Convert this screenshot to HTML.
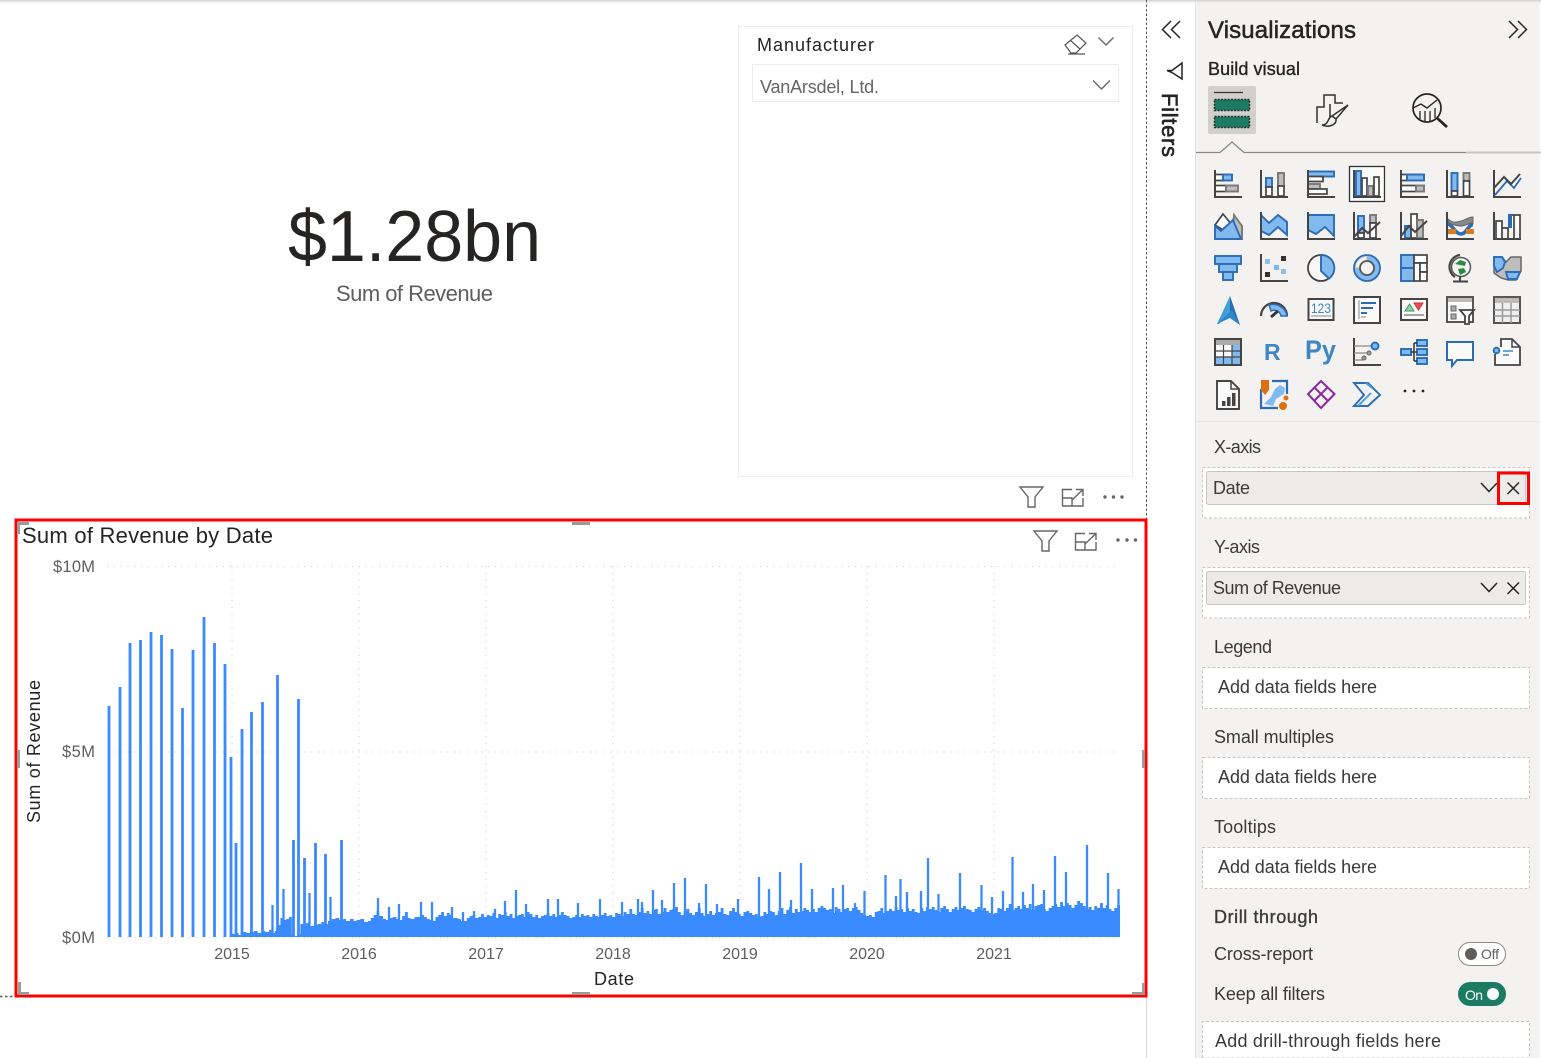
<!DOCTYPE html>
<html><head><meta charset="utf-8"><title>Power BI report</title>
<style>
html,body{margin:0;padding:0;background:#fff;width:1541px;height:1058px;overflow:hidden}
svg{display:block;position:absolute;left:0;top:0}
text{font-family:"Liberation Sans",Arial,sans-serif}
.l{font-size:18px;fill:#3b3a39}
.a{fill:none;stroke:#444;stroke-width:2}
.w{fill:#fff;stroke:#444;stroke-width:1.700}
.b{fill:#82baf0;stroke:#2b6cb5;stroke-width:1.900}
.g{fill:#bdbdbd;stroke:#777;stroke-width:1.900}
.n{fill:none;stroke:#2b6cb5;stroke-width:1.800}
.ui{fill:none;stroke:#666;stroke-width:1.400}
.dk{fill:none;stroke:#252423;stroke-width:1.500}
</style></head><body>
<svg width="1541" height="1058" viewBox="0 0 1541 1058" xmlns="http://www.w3.org/2000/svg">
<defs><linearGradient id="sh" x1="0" y1="0" x2="0" y2="1"><stop offset="0" stop-color="#d0d0d0"/><stop offset="1" stop-color="#fff" stop-opacity="0"/></linearGradient></defs>
<rect width="1541" height="1058" fill="#fff"/>

<!-- panes -->
<rect x="1196" y="0" width="345" height="1058" fill="#f3f2f1"/>
<rect x="1195" y="0" width="1" height="1058" fill="#e3e3e3"/>
<rect x="1539" y="0" width="2" height="1058" fill="#fafafa"/>
<rect x="0" y="0" width="1541" height="5" fill="url(#sh)"/>
<path d="M1146.500 0V519" stroke="#555" stroke-width="1" stroke-dasharray="2.500 2"/>
<path d="M1146.500 997V1058" stroke="#d8d8d8" stroke-width="1"/>
<path d="M0 996.500H15" stroke="#555" stroke-width="1.500" stroke-dasharray="2.500 2.500"/>

<!-- card -->
<text x="288" y="261" font-size="72" fill="#252423" textLength="253" lengthAdjust="spacingAndGlyphs">$1.28bn</text>
<text x="336" y="301" font-size="22" fill="#605e5c" textLength="157">Sum of Revenue</text>

<!-- slicer -->
<rect x="738.500" y="26.500" width="394" height="450" fill="#fff" stroke="#ececec"/>
<text x="757" y="51" font-size="18" fill="#252423" textLength="117">Manufacturer</text>
<path d="M1065 45L1077 35L1086 43L1076 53H1071ZM1070 40L1080 49M1068 54H1085" fill="none" stroke="#555" stroke-width="1.200"/>
<path d="M1098.500 37.500L1106 45L1113.500 37.500" class="ui" stroke="#555"/>
<rect x="752.500" y="64.500" width="366" height="37" fill="#fff" stroke="#ececec"/>
<text x="760" y="93" font-size="18" fill="#666" textLength="119">VanArsdel, Ltd.</text>
<path d="M1093 80.500L1101.500 89L1110 80.500" class="ui"/>
<path d="M1020 487H1043L1035 497V507H1028V497Z" class="ui"/>
<path d="M1072 489.500H1062.500V506H1083V498M1063 498H1072V506M1072 500L1083 489.500M1076 489.500H1083V496" class="ui"/>
<g fill="#666"><circle cx="1105" cy="497" r="1.700"/><circle cx="1113.500" cy="497" r="1.700"/><circle cx="1122" cy="497" r="1.700"/></g>

<!-- chart -->
<text x="22" y="543" font-size="22" fill="#252423" textLength="251">Sum of Revenue by Date</text>
<path d="M1034 531H1057L1049 541V551H1042V541Z" class="ui"/>
<path d="M1085 533.500H1075.500V550H1096V542M1076 542H1085V550M1085 544L1096 533.500M1089 533.500H1096V540" class="ui"/>
<g fill="#666"><circle cx="1118" cy="540" r="1.700"/><circle cx="1127" cy="540" r="1.700"/><circle cx="1135.500" cy="540" r="1.700"/></g>

<g font-size="16.500" fill="#605e5c">
<text x="53" y="572" textLength="42">$10M</text>
<text x="62" y="757" textLength="33">$5M</text>
<text x="62" y="943" textLength="33">$0M</text>
</g>
<g stroke="#d9d9d9" stroke-width="1.300" stroke-dasharray="1.300 5.500" fill="none">
<path d="M107 566.500H1120M107 752H1120M107 937.500H1120"/>
<path d="M232 566V937M359 566V937M486 566V937M613 566V937M740 566V937M867 566V937M994 566V937"/>
</g>
<g font-size="16" fill="#605e5c" text-anchor="middle">
<text x="232" y="959">2015</text><text x="359" y="959">2016</text><text x="486" y="959">2017</text><text x="613" y="959">2018</text><text x="740" y="959">2019</text><text x="867" y="959">2020</text><text x="994" y="959">2021</text>
</g>
<text x="594" y="985" font-size="18" fill="#252423" textLength="40">Date</text>
<text transform="translate(40 823) rotate(-90)" font-size="18" fill="#252423" textLength="143">Sum of Revenue</text>

<!-- bars -->
<path fill="#3a8bff" transform="translate(231 0) scale(.9508 1) translate(-231 0)" d="M231 937V934h4V933h4V935h4V932h4V933h4V932h4V931h4V933h4V931h4V932h4V930h3V933h3V931h3V925h3V918h3V920h3V919h3V917h3V934h3V936h3V934h3V924h3V926h3V923h4V926h4V925h4V924h4V922h3V924h4V921h4V919h4V918h4V920h4V919h3V921h4V919h4V921h3V920h4V919h4V922h4V921h3V918h3V915h3V911h3V916h4V919h3V920h3V918h4V917h4V919h3V920h3V916h3V912h3V918h3V919h4V917h4V917h3V915h3V917h3V919h3V920h3V921h3V917h3V915h3V912h3V916h3V913h3V915h3V918h3V918h3V919h3V921h3V921h3V918h3V916h3V915h3V918h3V917h3V914h3V917h3V915h3V916h3V913h3V918h3V914h3V915h3V912h3V916h3V914h3V918h3V916h3V915h3V914h3V917h3V912h3V914h3V917h3V915h3V918h3V916h3V915h3V913h3V916h3V914h3V917h3V915h3V912h3V915h3V916h3V918h3V917h3V915h3V917h3V914h3V916h3V915h3V917h3V914h3V916h3V917h3V915h3V913h3V916h3V915h3V917h3V913h3V914h3V916h3V912h3V914h3V909h3V914h3V915h3V912h3V908h3V913h3V911h3V914h3V910h3V909h3V914h3V912h3V908h3V912h3V910h3V909h3V907h3V912h3V915h3V911h3V909h3V913h3V915h3V912h3V908h3V913h3V916h3V914h3V911h3V915h3V913h3V912h3V908h3V914h3V915h3V911h3V908h3V912h3V914h3V916h3V912h3V911h3V913h3V915h3V914h3V917h3V916h3V912h3V914h3V911h3V912h3V915h3V911h3V908h3V914h3V910h3V907h3V913h3V909h3V912h3V911h3V908h3V910h3V912h3V909h3V912h3V908h3V906h3V908h3V910h3V909h3V913h3V907h3V909h3V912h3V909h3V908h3V911h3V908h3V907h3V910h3V913h3V915h3V916h3V915h3V917h3V912h3V911h3V908h3V913h3V911h3V909h3V911h3V907h3V910h3V909h3V912h3V908h3V911h3V909h3V912h3V913h3V908h3V911h3V907h3V909h3V907h3V910h3V912h3V908h3V906h3V909h3V912h3V909h3V907h3V910h3V908h3V906h3V909h3V910h3V912h3V909h3V907h3V910h3V908h3V911h3V913h3V914h3V913h3V908h3V909h3V911h3V908h3V904h3V910h3V908h3V906h3V909h3V905h3V908h3V904h3V910h3V906h3V905h3V904h3V909h3V911h3V908h3V906h3V904h3V907h3V902h3V906h3V903h3V905h3V908h3V905h3V901h3V903h3V906h3V909h3V907h3V910h3V906h3V908h3V903h3V908h3V905h3V909h3V911h3V908h3V905h3V903V937Z"/>
<path fill="none" stroke="#3a8bff" stroke-width="2.800" d="M109 937V706M120 937V687M130 937V643M140.500 937V640M151 937V632M161.500 937V635M172 937V649M182.500 937V708M193 937V650M204 937V617M214.500 937V643M225 937V664M231 937V757M236 937V843M242 937V729M251.500 937V712M262.500 937V702M277.500 937V675M298.500 937V699M293.500 937V840M304.500 937V858M315.500 937V843M325.500 937V854M341.500 937V840"/>
<path fill="none" stroke="#3a8bff" stroke-width="2.300" d="M272.500 937V905M283.500 937V889M309.500 937V893M330.500 937V897M378 937V898M389 937V907M399 937V904M421 937V902M432 937V902M452 937V907M463 937V912M474 937V911M495 937V909M505 937V901M516 937V890M526 937V904M548 937V899M558 937V899M578 937V903M600 937V899M622 937V902M638 937V899M642 937V902M653 937V890M662 937V900M674 937V883M685 937V878M699 937V903M706 937V884M717 937V904M738 937V899M759 937V877M769 937V889M780 937V872M791 937V900M801 937V863M812 937V889M833 937V888M843 937V885M855 937V903M864.500 937V891M885.500 937V875M896 937V896M900.500 937V879M907 937V892M921 937V891M928 937V858M938.500 937V894M960 937V873M981.500 937V885M992 937V897M1003 937V891M1012.500 937V857M1023 937V892M1033 937V884M1044 937V890M1055 937V856M1066 937V872M1087 937V845M1108 937V873M1118.500 937V889"/>

<!-- red selection + handles -->
<rect x="16" y="520" width="1130" height="476" fill="none" stroke="#fe0000" stroke-width="3"/>
<g fill="#9b9b9b">
<path d="M17 522H29V525H20V534H17Z"/>
<path d="M18 982H21V992H29V995H18Z"/>
<path d="M1132 992H1142V983H1145V995H1132Z"/>
<rect x="572" y="522" width="18" height="3"/><rect x="572" y="992" width="18" height="3"/>
<rect x="17" y="750" width="3" height="18"/><rect x="1142" y="750" width="3" height="18"/>
</g>

<!-- filter pane -->
<path d="M1171 21L1162.500 29.500L1171 38M1180 21L1171.500 29.500L1180 38" class="dk"/>
<path d="M1167 70.500H1172L1182 63V79L1172 72.500Z" class="dk"/>
<text transform="translate(1162 93) rotate(90)" font-size="22" fill="#252423" textLength="64" stroke="#252423" stroke-width=".6">Filters</text>

<!-- viz pane header -->
<text x="1208" y="38" font-size="24" fill="#252423" stroke="#252423" stroke-width=".5" textLength="148">Visualizations</text>
<path d="M1509 21L1517.500 29.500L1509 38M1518 21L1526.500 29.500L1518 38" class="dk"/>
<text x="1208" y="75" font-size="18" fill="#252423" stroke="#252423" stroke-width=".35" textLength="92">Build visual</text>

<rect x="1208" y="86" width="48" height="48" rx="2" fill="#d2d0ce"/>
<path d="M1214 92.500H1243" stroke="#333" stroke-width="1.300"/>
<g fill="#1c7b63" stroke="#2b2b2b" stroke-width="1.500" stroke-dasharray="2 1.300"><rect x="1214.500" y="99.500" width="35" height="11"/><rect x="1214.500" y="116.500" width="35" height="11"/></g>

<path d="M1317 123V107H1324V95H1335V103H1343M1330 104V119" fill="none" stroke="#323130" stroke-width="1.500"/>
<path d="M1348 105L1336 119L1332 116ZM1332 116C1327 118 1329 125 1322 125C1328 128 1337 125 1336 119" fill="#f3f2f1" stroke="#323130" stroke-width="1.500"/>
<circle cx="1427" cy="108" r="14" fill="none" stroke="#252423" stroke-width="1.700"/>
<path d="M1413 108L1421 104L1427 108L1437 100" fill="none" stroke="#252423" stroke-width="1.400"/>
<path d="M1420 111V119M1425 111V121M1430 111V121M1435 108V118" stroke="#252423" stroke-width="1.300"/>
<path d="M1437 118L1447 127" stroke="#252423" stroke-width="2.800"/>

<path d="M1196 152.500H1220L1232 142L1244 152.500H1466" fill="none" stroke="#8a8886" stroke-width="1.300"/>
<path d="M1466 152.500H1541" stroke="#c8c6c4" stroke-width="2"/>

<!-- ICON GRID -->
<rect x="1349.500" y="166.500" width="35" height="35" fill="#fafafa" stroke="#333" stroke-width="1.300"/>
<g class="ic">
<!-- row1 -->
<g transform="translate(1214 170)"><rect class="w" x="1" y="4.500" width="8" height="6"/><rect class="b" x="9" y="4.500" width="9" height="6"/><rect class="w" x="1" y="15.500" width="11" height="6"/><rect class="g" x="12" y="15.500" width="12" height="6"/><path class="a" d="M1 0V27H28"/></g>
<g transform="translate(1260 170)"><rect class="b" x="6" y="8" width="6" height="9"/><rect class="w" x="6" y="17" width="6" height="9"/><rect class="g" x="18" y="3" width="6" height="13"/><rect class="w" x="18" y="16" width="6" height="10"/><path class="a" d="M1 0V27H28"/></g>
<g transform="translate(1307 170)"><rect class="b" x="1" y="1.500" width="26" height="5"/><rect class="w" x="1" y="6.500" width="15" height="5"/><rect class="g" x="1" y="14" width="12" height="5"/><rect class="w" x="1" y="19" width="19" height="5"/><path class="a" d="M1 0V27H28"/></g>
<g transform="translate(1353 170)"><rect class="b" x="3" y="1" width="5" height="25"/><rect class="w" x="9" y="8" width="5" height="18"/><rect class="g" x="15" y="16" width="5" height="10"/><rect class="w" x="21" y="7" width="5" height="19"/><path class="a" d="M1 0V27H28"/></g>
<g transform="translate(1400 170)"><rect class="w" x="1" y="4.500" width="6" height="6"/><rect class="b" x="7" y="4.500" width="17" height="6"/><rect class="w" x="1" y="15.500" width="15" height="6"/><rect class="g" x="16" y="15.500" width="8" height="6"/><path class="a" d="M1 0V27H28"/></g>
<g transform="translate(1446 170)"><rect class="b" x="5.500" y="3" width="6" height="18"/><rect class="w" x="5.500" y="21" width="6" height="5"/><rect class="g" x="17.500" y="3" width="6" height="8"/><rect class="w" x="17.500" y="11" width="6" height="15"/><path class="a" d="M1 0V27H28"/></g>
<g transform="translate(1493 170)"><path class="n" d="M2 25L14 11L21 18L28 8"/><path class="a" d="M1 18L11 7L18 14L27 4" stroke-width="1.700"/><path class="a" d="M1 0V27H28"/></g>
<!-- row2 -->
<g transform="translate(1214 212)"><path class="g" d="M18 27L20 3L28 14V27Z"/><path class="w" d="M1 13L9 2L18 13L20 18L14 21Z"/><path class="b" d="M1 14L7 19L19 8L27 27H1Z"/></g>
<g transform="translate(1260 212)"><path class="b" d="M1 3L9 11L18 3L27 10V23L18 15L9 23L1 19Z"/><path class="a" d="M1 0V27H28"/></g>
<g transform="translate(1307 212)"><path class="b" d="M1 3H27V24L18 15L9 22L1 18Z"/><path class="a" d="M1 0V27H28"/></g>
<g transform="translate(1353 212)"><rect class="b" x="5" y="4" width="6" height="17"/><rect class="w" x="5" y="21" width="6" height="5"/><rect class="g" x="17" y="3" width="6" height="8"/><rect class="w" x="17" y="11" width="6" height="15"/><path class="a" d="M1 25L9 16L15 21L27 10M1 0V27H28"/></g>
<g transform="translate(1400 212)"><rect class="b" x="5" y="14" width="6" height="12"/><rect class="w" x="11" y="2" width="6" height="24"/><rect class="g" x="17" y="8" width="6" height="18"/><path class="a" d="M1 24L9 14L15 20L27 9M1 0V27H28"/></g>
<g transform="translate(1446 212)"><path d="M2 7C8 12 10 10 15 9C20 8 22 5 27 5V11C22 11 20 14 15 14C10 14 7 12 2 12Z" fill="#888" stroke="#666"/><path d="M2 12C7 13 9 22 15 22C21 22 22 12 27 13" fill="none" stroke="#2b6cb5" stroke-width="3.500"/><rect x="2" y="17" width="8" height="5" fill="#dd7a1d"/><rect x="20" y="17" width="8" height="5" fill="#dd7a1d"/><path class="a" d="M1 0V27H28"/></g>
<g transform="translate(1493 212)"><path class="w" d="M3 26V9H9V26M15 26V16H9M15 3H21V26M21 3H27V26" stroke-width="2"/><rect x="15" y="2" width="4" height="14" fill="#2b6cb5"/><path class="a" d="M1 0V27H28"/></g>
<!-- row3 -->
<g transform="translate(1214 254)"><rect class="b" x="1" y="2" width="26" height="8"/><rect class="b" x="5" y="10" width="18" height="8"/><rect class="b" x="9" y="18" width="10" height="8"/></g>
<g transform="translate(1260 254)"><path class="a" d="M1 0V27H28"/><rect x="5" y="5" width="5" height="5" fill="#8ebee9"/><rect x="21" y="2" width="5" height="5" fill="#333"/><rect x="14" y="11" width="5" height="5" fill="#7fb8ee"/><rect x="5" y="18" width="5" height="5" fill="#333"/><rect x="21" y="15" width="5" height="5" fill="#8ebee9"/></g>
<g transform="translate(1307 254)"><circle cx="14" cy="14" r="13" fill="#f8f8f8" stroke="#444" stroke-width="1.800"/><path class="b" d="M14 1A13 13 0 0 1 22 24.500L14 17Z"/></g>
<g transform="translate(1353 254)"><circle cx="14" cy="14" r="10" fill="none" stroke="#82baf0" stroke-width="6"/><path d="M2 14A12 12 0 0 1 14 2V7A7 7 0 0 0 7 14Z" fill="#f3f2f1" stroke="#bbb" stroke-width="1"/><circle cx="14" cy="14" r="13" fill="none" stroke="#2b6cb5" stroke-width="1.800"/><circle cx="14" cy="14" r="7" fill="#f3f2f1" stroke="#555" stroke-width="1.800"/></g>
<g transform="translate(1400 254)"><rect class="b" x="1" y="1" width="13" height="13"/><rect class="b" x="1" y="14" width="13" height="13"/><rect class="w" x="14" y="1" width="13" height="8"/><rect class="w" x="14" y="9" width="6" height="18"/><rect class="w" x="20" y="9" width="7" height="9"/><rect class="w" x="20" y="18" width="7" height="9"/></g>
<g transform="translate(1446 254)"><path d="M14 1A12 12 0 0 0 9 23" fill="none" stroke="#444" stroke-width="2.200"/><circle cx="15" cy="13" r="9.500" fill="#f5f5f5" stroke="#555" stroke-width="1.500"/><path d="M9 10L14 6L20 8L19 12L14 11ZM12 15L18 14L20 18L14 21Z" fill="#2d8a3e"/><path class="a" d="M14 23V27M7 27.500H22"/></g>
<g transform="translate(1493 254)"><path d="M1 3H9L13 8L18 3H28V17L23 26H15L8 24L1 19Z" fill="#bdbdbd" stroke="#666" stroke-width="1.500"/><path class="b" d="M1 3H9L12 8L10 14L4 18L1 12Z"/><path class="b" d="M13 18H27L24 25H15Z"/></g>
<!-- row4 -->
<g transform="translate(1214 296)"><path d="M3 28L16 0L18 14L5 28Z" fill="#3f9fd6"/><path d="M16 0L26 29L16 22Z" fill="#2b6cb5"/><path d="M3 28L16 22L26 29L18 14Z" fill="#2f87c9"/></g>
<g transform="translate(1260 296)"><path d="M1 20A13 13 0 0 1 27 20" fill="none" stroke="#444" stroke-width="2.200"/><path d="M9 9A14 13 0 0 1 27 20H21A7 7 0 0 0 11 15Z" fill="#82baf0" stroke="#2b6cb5" stroke-width="1.500"/><path d="M11 21L18 15" stroke="#333" stroke-width="2.800"/></g>
<g transform="translate(1307 296)"><rect x="1.500" y="3" width="25" height="21" fill="#f8f8f8" stroke="#444" stroke-width="2"/><text x="4" y="17" font-size="14" fill="#3d87cc" textLength="20" lengthAdjust="spacingAndGlyphs">123</text><path d="M4 20H24" stroke="#888"/></g>
<g transform="translate(1353 296)"><rect x="1" y="1" width="26" height="26" fill="#fafafa" stroke="#444" stroke-width="2"/><path d="M6 4V23" stroke="#888"/><path d="M8 7H23M8 12H20M8 17H14" stroke="#2b6cb5" stroke-width="2"/><path d="M8 21H13" stroke="#888"/></g>
<g transform="translate(1400 296)"><rect x="1" y="3" width="26" height="21" fill="#fafafa" stroke="#444" stroke-width="2"/><path d="M5 15L9.500 8L14 15Z" fill="#9ad1a4" stroke="#3a9a58"/><path d="M14 7H23L18.500 14Z" fill="#f24d4d" stroke="#c33"/><path d="M4 19H24" stroke="#888" stroke-width="1.500"/></g>
<g transform="translate(1446 296)"><rect x="1" y="1" width="26" height="25" fill="#fafafa" stroke="#444" stroke-width="1.800"/><rect x="2" y="2" width="24" height="4" fill="#bbb"/><rect x="5" y="10" width="5" height="5" fill="#aaa" stroke="#666"/><rect x="5" y="18" width="5" height="5" fill="#aaa" stroke="#666"/><path d="M14 14H28L23 20V28H19V20Z" fill="#fafafa" stroke="#444" stroke-width="1.800"/></g>
<g transform="translate(1493 296)"><rect x="1" y="1" width="26" height="26" fill="#f0f0f0" stroke="#555" stroke-width="2"/><rect x="2" y="2" width="24" height="5" fill="#bbb"/><path d="M1 14H27M1 20H27M9.500 7V27M18 7V27" stroke="#999" stroke-width="1.500"/></g>
<!-- row5 -->
<g transform="translate(1214 338)"><rect x="1" y="1" width="26" height="26" fill="#fafafa" stroke="#444" stroke-width="2"/><rect x="2" y="2" width="24" height="5" fill="#aaa"/><rect x="18" y="7" width="8" height="19" fill="#82baf0"/><rect x="2" y="19" width="24" height="7" fill="#82baf0"/><path d="M1 13H27M1 19H27M9.500 7V27M18 7V27" stroke="#444" stroke-width="1.200"/></g>
<text x="1264" y="360" font-size="23" font-weight="bold" fill="#3f86c4">R</text>
<text x="1305" y="359" font-size="27" font-weight="bold" fill="#3f86c4" textLength="31" lengthAdjust="spacingAndGlyphs">Py</text>
<g transform="translate(1353 338)"><path class="a" d="M1 0V27H28"/><path d="M1 8H19M1 15H15M1 22H10" stroke="#888" stroke-width="1.300"/><circle cx="22" cy="8" r="3.500" class="b"/><circle cx="16" cy="15" r="2" fill="#999" stroke="#666"/><circle cx="11" cy="20" r="2" fill="#999" stroke="#666"/></g>
<g transform="translate(1400 338)"><rect class="b" x="1" y="11" width="10" height="6"/><rect class="b" x="17" y="2" width="10" height="6"/><rect class="b" x="17" y="11" width="10" height="6"/><rect class="b" x="17" y="20" width="10" height="6"/><path d="M11 14H17M14 5V23M14 5H17M14 23H17" stroke="#333" stroke-width="1.500" fill="none"/></g>
<g transform="translate(1446 338)"><path d="M1 4H27V22H11L6 28V22H1Z" fill="#fafafa" stroke="#2b6cb5" stroke-width="2"/></g>
<g transform="translate(1493 338)"><path d="M8 9V1H19L27 9V27H2V16" fill="#fafafa" stroke="#444" stroke-width="1.800"/><path d="M19 1V9H27" fill="none" stroke="#444" stroke-width="1.500"/><circle cx="3.500" cy="12.500" r="2.800" class="b"/><path d="M10 13H20M10 17H16" stroke="#3a87d0" stroke-width="1.500"/></g>
<!-- row6 -->
<g transform="translate(1214 380)"><path d="M3 1H17L25 9V29H3Z" fill="#fafafa" stroke="#444" stroke-width="1.900"/><path d="M17 1V9H25" fill="none" stroke="#444" stroke-width="1.500"/><path d="M8 21H11.500V26H8ZM13 17H16.500V26H13ZM18 13H21.500V26H18Z" fill="#444"/></g>
<g transform="translate(1260 380)"><path d="M1 9V28H18M12 1H27V14" fill="none" stroke="#2b6cb5" stroke-width="2.200"/><path d="M4 24L11 17L15 9L20 5L25 8L24 14L16 19L13 26Z" fill="#82baf0"/><path d="M1 0H9V10L5 15L1 10Z" fill="#dd6f10"/><circle cx="23" cy="26" r="4" fill="#dd6f10"/><circle cx="26" cy="18" r="2.500" fill="#dd6f10"/></g>
<g transform="translate(1307 380)" fill="none" stroke="#8b2a9e" stroke-width="2"><path d="M14 1L27.500 14L14 28L1 14ZM8 8L21 21M20 8L7 21"/></g>
<g transform="translate(1353 380)" fill="none" stroke="#2b6cb5" stroke-width="1.900"><path d="M1 3H15L27 15L15 26H1L11 15Z"/><path d="M5 26L18 13M13 3L19 8" stroke="#3f9fe0"/></g>
<g fill="#252423"><circle cx="1405" cy="391" r="1.400"/><circle cx="1414" cy="391" r="1.400"/><circle cx="1423" cy="391" r="1.400"/></g>
</g>
<path d="M1196 421.500H1539" stroke="#e6e5e3"/>

<!-- field wells -->
<text class="l" x="1214" y="453" textLength="47">X-axis</text>
<rect x="1202.500" y="467.500" width="327" height="50.500" fill="#fff" stroke="#c8c6c4" stroke-dasharray="3 2"/>
<rect x="1206.500" y="471.500" width="319" height="33" rx="2" fill="#edebe9" stroke="#c8c6c4"/>
<text class="l" x="1213" y="494" textLength="37">Date</text>
<path d="M1481 483L1489 491.500L1497 483" class="dk" stroke-width="1.100"/>
<rect x="1498.500" y="473" width="30" height="30.500" fill="none" stroke="#f00" stroke-width="3"/>
<path d="M1507.500 482.500L1519 494M1519 482.500L1507.500 494" class="dk" stroke-width="1.100"/>

<text class="l" x="1214" y="553" textLength="46">Y-axis</text>
<rect x="1202.500" y="567.500" width="327" height="50.500" fill="#fff" stroke="#c8c6c4" stroke-dasharray="3 2"/>
<rect x="1206.500" y="571.500" width="319" height="33" rx="2" fill="#edebe9" stroke="#c8c6c4"/>
<text class="l" x="1213" y="594" textLength="128">Sum of Revenue</text>
<path d="M1481 583L1489 591.500L1497 583" class="dk" stroke-width="1.100"/>
<path d="M1507.500 582.500L1519 594M1519 582.500L1507.500 594" class="dk" stroke-width="1.100"/>

<text class="l" x="1214" y="653" textLength="58">Legend</text>
<rect x="1202.500" y="667.500" width="327" height="41" fill="#fff" stroke="#c8c6c4" stroke-dasharray="3 2"/>
<text class="l" x="1218" y="693" textLength="159">Add data fields here</text>
<text class="l" x="1214" y="743" textLength="120">Small multiples</text>
<rect x="1202.500" y="757.500" width="327" height="41" fill="#fff" stroke="#c8c6c4" stroke-dasharray="3 2"/>
<text class="l" x="1218" y="783" textLength="159">Add data fields here</text>
<text class="l" x="1214" y="833" textLength="62">Tooltips</text>
<rect x="1202.500" y="847.500" width="327" height="41" fill="#fff" stroke="#c8c6c4" stroke-dasharray="3 2"/>
<text class="l" x="1218" y="873" textLength="159">Add data fields here</text>

<text class="l" x="1214" y="923" textLength="104" stroke="#3b3a39" stroke-width=".35">Drill through</text>
<text class="l" x="1214" y="960" textLength="99">Cross-report</text>
<rect x="1458.500" y="942.500" width="47" height="23" rx="11.500" fill="#fff" stroke="#8a8886"/>
<circle cx="1471" cy="954" r="6" fill="#605e5c"/>
<text x="1481" y="959" font-size="14" fill="#605e5c" textLength="18">Off</text>
<text class="l" x="1214" y="1000" textLength="111">Keep all filters</text>
<rect x="1458" y="982" width="48" height="24" rx="12" fill="#1c7b63"/>
<text x="1465" y="1000" font-size="14" fill="#fff" textLength="18">On</text>
<circle cx="1493" cy="994" r="6" fill="#fff"/>
<path d="M1202.500 1058V1021.500H1529.500V1058Z" fill="#fff" stroke="#c8c6c4" stroke-dasharray="3 2"/>
<text class="l" x="1215" y="1047" textLength="226">Add drill-through fields here</text>
</svg>
</body></html>
